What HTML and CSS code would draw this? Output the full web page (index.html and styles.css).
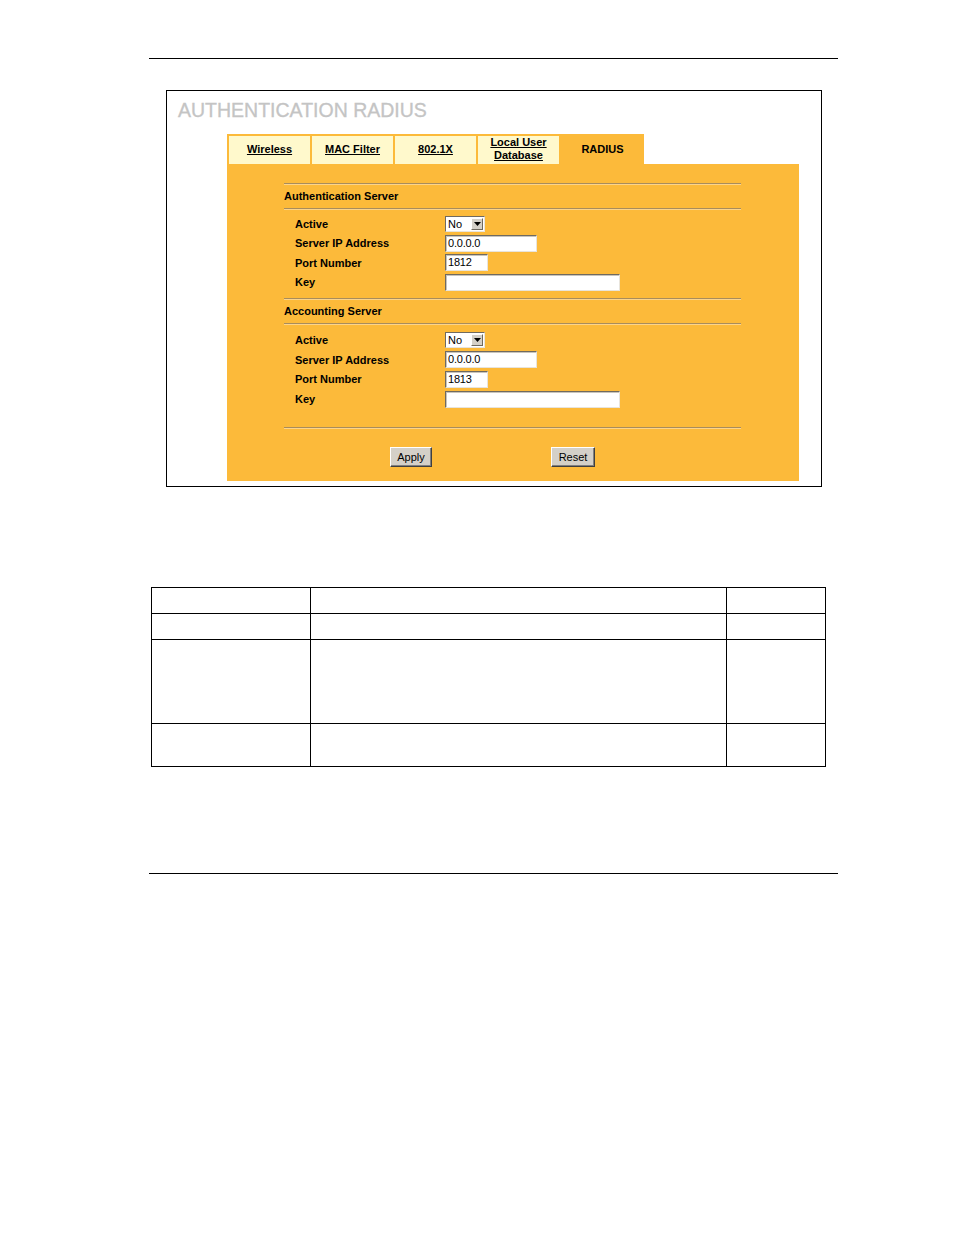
FILE: index.html
```html
<!DOCTYPE html>
<html>
<head>
<meta charset="utf-8">
<link rel="stylesheet" href="styles.css">
</head>
<body>
<div class="page">
  <div class="rule top-rule"></div>

  <div class="shot">
    <div class="title">AUTHENTICATION RADIUS</div>
    <div class="ui">
      <div class="tabs">
        <div class="tab"><span class="link">Wireless</span></div>
        <div class="tab"><span class="link">MAC Filter</span></div>
        <div class="tab"><span class="link">802.1X</span></div>
        <div class="tab"><span class="link">Local User<br>Database</span></div>
        <div class="tab active"><span>RADIUS</span></div>
      </div>
      <div class="panel">
        <div class="content">
          <div class="line first"></div>
          <div class="section-head">Authentication Server</div>
          <div class="line"></div>
          <div class="rows">
            <div class="row">
              <div class="label">Active</div>
              <div class="select"><span class="sel-val">No</span><span class="sel-btn"><svg width="7" height="4" viewBox="0 0 7 4"><path d="M0 0h7L3.5 4z" fill="#000"/></svg></span></div>
            </div>
            <div class="row">
              <div class="label">Server IP Address</div>
              <div class="input w-ip">0.0.0.0</div>
            </div>
            <div class="row">
              <div class="label">Port Number</div>
              <div class="input w-port">1812</div>
            </div>
            <div class="row">
              <div class="label">Key</div>
              <div class="input w-key"></div>
            </div>
          </div>
          <div class="line"></div>
          <div class="section-head">Accounting Server</div>
          <div class="line"></div>
          <div class="rows second">
            <div class="row">
              <div class="label">Active</div>
              <div class="select"><span class="sel-val">No</span><span class="sel-btn"><svg width="7" height="4" viewBox="0 0 7 4"><path d="M0 0h7L3.5 4z" fill="#000"/></svg></span></div>
            </div>
            <div class="row">
              <div class="label">Server IP Address</div>
              <div class="input w-ip">0.0.0.0</div>
            </div>
            <div class="row">
              <div class="label">Port Number</div>
              <div class="input w-port">1813</div>
            </div>
            <div class="row">
              <div class="label">Key</div>
              <div class="input w-key"></div>
            </div>
          </div>
          <div class="line bottom"></div>
          <div class="buttons">
            <div class="btn apply">Apply</div>
            <div class="btn reset">Reset</div>
          </div>
        </div>
      </div>
    </div>
  </div>

  <table class="desc">
    <tr class="r1"><td class="c1"></td><td class="c2"></td><td class="c3"></td></tr>
    <tr class="r2"><td></td><td></td><td></td></tr>
    <tr class="r3"><td></td><td></td><td></td></tr>
    <tr class="r4"><td></td><td></td><td></td></tr>
  </table>

  <div class="rule bottom-rule"></div>
</div>
</body>
</html>
```

FILE: styles.css
```css
html, body {
  margin: 0;
  padding: 0;
  background: #fff;
}

body {
  font-family: "Liberation Sans", Arial, sans-serif;
  width: 954px;
  height: 1235px;
}

.page {
  padding-top: 58px;
}

.rule {
  height: 1px;
  background: #000;
  width: 689px;
  margin-left: 149px;
}

.shot {
  margin-top: 31px;
  margin-left: 166px;
  width: 654px;
  height: 395px;
  border: 1px solid #000;
}

.title {
  font-size: 19.5px;
  color: #c4c4c4;
  padding-left: 11px;
  padding-top: 9px;
  height: 25px;
  line-height: 20px;
  -webkit-text-stroke: 0.3px #c4c4c4;
}

.ui {
  margin-left: 60px;
  margin-top: 9px;
  width: 572px;
}

.tabs {
  display: flex;
  height: 30px;
}

.tab {
  width: 81px;
  height: 28px;
  background: #fff9cc;
  border-top: 2px solid #fcba3a;
  border-left: 2px solid #fcba3a;
  display: flex;
  align-items: center;
  justify-content: center;
  text-align: center;
  font-size: 11px;
  font-weight: bold;
  line-height: 13px;
  color: #000;
}

.tab .link {
  text-decoration: underline;
  margin-top: -2px;
}

.tab.active {
  background: #fcba3a;
  width: 83px;
}

.tab.active span {
  margin-top: -2px;
}

.panel {
  background: #fcba3a;
  height: 317px;
}

.content {
  margin-left: 57px;
  width: 457px;
  padding-top: 19px;
}

.line {
  height: 0;
  border-top: 1px solid #a88c5c;
  border-bottom: 1px solid #fdd48a;
}

.section-head {
  height: 23px;
  line-height: 23px;
  font-size: 11px;
  font-weight: bold;
  color: #000;
}

.rows {
  padding-top: 4px;
  padding-bottom: 6px;
}

.rows.second {
  padding-top: 5px;
  padding-bottom: 5px;
}

.row {
  height: 19.5px;
  display: flex;
  align-items: center;
  padding-left: 11px;
}

.rows.second .row {
  height: 19.75px;
}

.label {
  width: 150px;
  font-size: 11px;
  font-weight: bold;
  color: #000;
}

.input {
  box-sizing: border-box;
  height: 17px;
  background: #fff;
  border-top: 1px solid #6f6a60;
  border-left: 1px solid #6f6a60;
  border-right: 1px solid #e8e4dc;
  border-bottom: 1px solid #e8e4dc;
  box-shadow: inset 1px 1px 0 #c8c4bc;
  font-size: 11px;
  line-height: 15px;
  padding-left: 2px;
  color: #000;
  letter-spacing: -0.2px;
}

.w-ip { width: 92px; }
.w-port { width: 43px; }
.w-key { width: 175px; }

.select {
  box-sizing: border-box;
  width: 40px;
  height: 16px;
  background: #fff;
  border-top: 1px solid #6f6a60;
  border-left: 1px solid #6f6a60;
  border-right: 1px solid #e8e4dc;
  border-bottom: 1px solid #e8e4dc;
  display: flex;
  align-items: center;
  font-size: 11px;
  color: #000;
}

.sel-val {
  flex: 1;
  padding-left: 2px;
  line-height: 14px;
}

.sel-btn {
  width: 12px;
  height: 12px;
  margin-right: 1px;
  background: #d4d0c8;
  border-top: 1px solid #fff;
  border-left: 1px solid #fff;
  border-right: 1px solid #6f6a60;
  border-bottom: 1px solid #6f6a60;
  box-sizing: border-box;
  display: flex;
  align-items: center;
  justify-content: center;
}

.line.bottom {
  margin-top: 13px;
}

.buttons {
  height: 56px;
  display: flex;
  align-items: center;
}

.btn {
  box-sizing: border-box;
  height: 20px;
  background: #d4d0c8;
  border-top: 1px solid #fff;
  border-left: 1px solid #fff;
  border-right: 1px solid #404040;
  border-bottom: 1px solid #404040;
  box-shadow: inset -1px -1px 0 #808080;
  font-size: 11px;
  line-height: 18px;
  text-align: center;
  color: #000;
}

.btn.apply {
  width: 42px;
  margin-left: 106px;
}

.btn.reset {
  width: 44px;
  margin-left: 119px;
}

.desc {
  margin-top: 100px;
  margin-left: 151px;
  width: 674px;
  border-collapse: collapse;
  table-layout: fixed;
}

.desc td {
  border: 1px solid #000;
  padding: 0;
}

.desc .c1 { width: 158px; }
.desc .c2 { width: 415px; }
.desc .c3 { width: 98px; }

.desc .r1 td { height: 25px; }
.desc .r2 td { height: 25px; }
.desc .r3 td { height: 83px; }
.desc .r4 td { height: 42px; }

.bottom-rule {
  margin-top: 106px;
}
```
